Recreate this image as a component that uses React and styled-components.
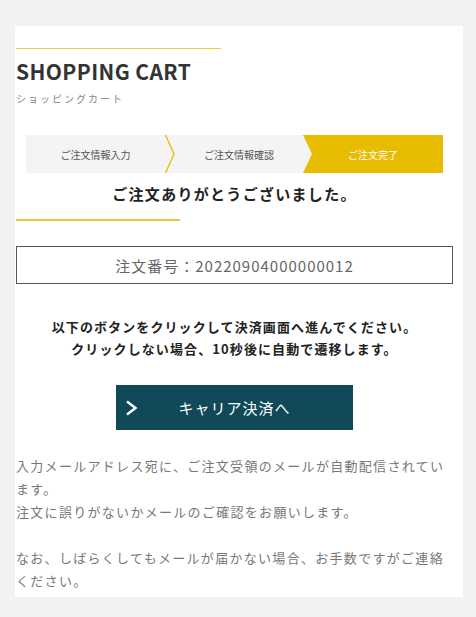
import React from 'react';
import styled, {createGlobalStyle} from 'styled-components';

const GlobalStyle = createGlobalStyle`
  html, body {
    margin: 0;
    padding: 0;
    background: #f2f2f2;
  }
  body {
    font-family: "Noto Sans CJK JP", "Noto Sans", sans-serif;
  }
`

const Card = styled.div`
  width: 437px;
  margin: 26px 0 0 15px;
  padding: 22px 10px 5px 1px;
  background: #fff;
`

const Rule = styled.div`
  width: ${props => props.w}px;
  height: ${props => props.h || 1}px;
  background: ${props => props.color || '#f5cf3a'};
  margin-top: ${props => props.top || 0}px;
`

const Title = styled.h1`
  margin: 8px 0 0;
  font-size: 21px;
  line-height: 28px;
  font-weight: 700;
  letter-spacing: 0.4px;
  color: #333;
`

const Sub = styled.div`
  margin-top: 7px;
  font-size: 10px;
  line-height: 14px;
  letter-spacing: 2px;
  color: #888;
`

const Steps = styled.div`
  display: flex;
  height: 38px;
  margin: 29px 10px 0;
  background: #f4f4f4;
`

const Step = styled.div`
  width: ${props => props.w}px;
  display: flex;
  align-items: center;
  justify-content: center;
  font-size: 10px;
  color: ${props => props.active ? '#fff' : '#555'};
  background: ${props => props.active ? '#e8bc00' : 'transparent'};
  clip-path: ${props => props.active ? 'polygon(0 0, 100% 0, 100% 100%, 0 100%, 9px 50%)' : 'none'};
  flex: ${props => props.active ? 1 : 'none'};
`

const Thanks = styled.h2`
  margin: 10px 0 0;
  text-align: center;
  font-size: 15px;
  line-height: 22px;
  font-weight: 700;
  letter-spacing: 1.3px;
  color: #222;
`

const OrderBox = styled.div`
  margin-top: 25px;
  height: 36px;
  border: 1px solid #555;
  display: flex;
  align-items: center;
  justify-content: center;
  font-size: 15px;
  letter-spacing: 1px;
  color: #666;
`

const Notice = styled.p`
  margin: 32px 0 0;
  text-align: center;
  font-size: 13px;
  line-height: 22px;
  font-weight: 700;
  letter-spacing: 1.1px;
  color: #222;
`

const PayButton = styled.button`
  display: grid;
  grid-template-columns: 30px 1fr 30px;
  align-items: center;
  width: 237px;
  height: 45px;
  margin: 25px auto 0;
  padding: 0;
  border: none;
  background: #104a59;
  color: #fff;
  font-family: inherit;
  font-size: 15px;
  letter-spacing: 1px;
  cursor: pointer;

  svg {
    margin-left: 9px;
  }
`

const Info = styled.p`
  margin: 24px 0 0;
  font-size: 13px;
  line-height: 23px;
  letter-spacing: 1.3px;
  color: #777;
`

export default function App() {
  return (
    <>
      <GlobalStyle />
      <Card>
        <Rule w={205} />
        <Title>SHOPPING CART</Title>
        <Sub>ショッピングカート</Sub>
        <Steps>
          <Step w={139}>ご注文情報入力</Step>
          <svg width="10" height="38" viewBox="0 0 10 38">
            <polyline points="0.5,0 9,19 0.5,38" fill="none" stroke="#e8bc00" strokeWidth="1.3" />
          </svg>
          <Step w={128}>ご注文情報確認</Step>
          <Step active>ご注文完了</Step>
        </Steps>
        <Thanks>ご注文ありがとうございました。</Thanks>
        <Rule w={164} h={2} color="#eec431" top={14} />
        <OrderBox>注文番号：20220904000000012</OrderBox>
        <Notice>
          以下のボタンをクリックして決済画面へ進んでください。<br />
          クリックしない場合、10秒後に自動で遷移します。
        </Notice>
        <PayButton type="button">
          <svg width="13" height="16" viewBox="0 0 13 16">
            <polyline points="2,1.5 10.5,8 2,14.5" fill="none" stroke="#fff" strokeWidth="2.4" />
          </svg>
          <span>キャリア決済へ</span>
        </PayButton>
        <Info>
          入力メールアドレス宛に、ご注文受領のメールが自動配信されています。<br />
          注文に誤りがないかメールのご確認をお願いします。<br />
          <br />
          なお、しばらくしてもメールが届かない場合、お手数ですがご連絡ください。
        </Info>
      </Card>
    </>
  )
}
